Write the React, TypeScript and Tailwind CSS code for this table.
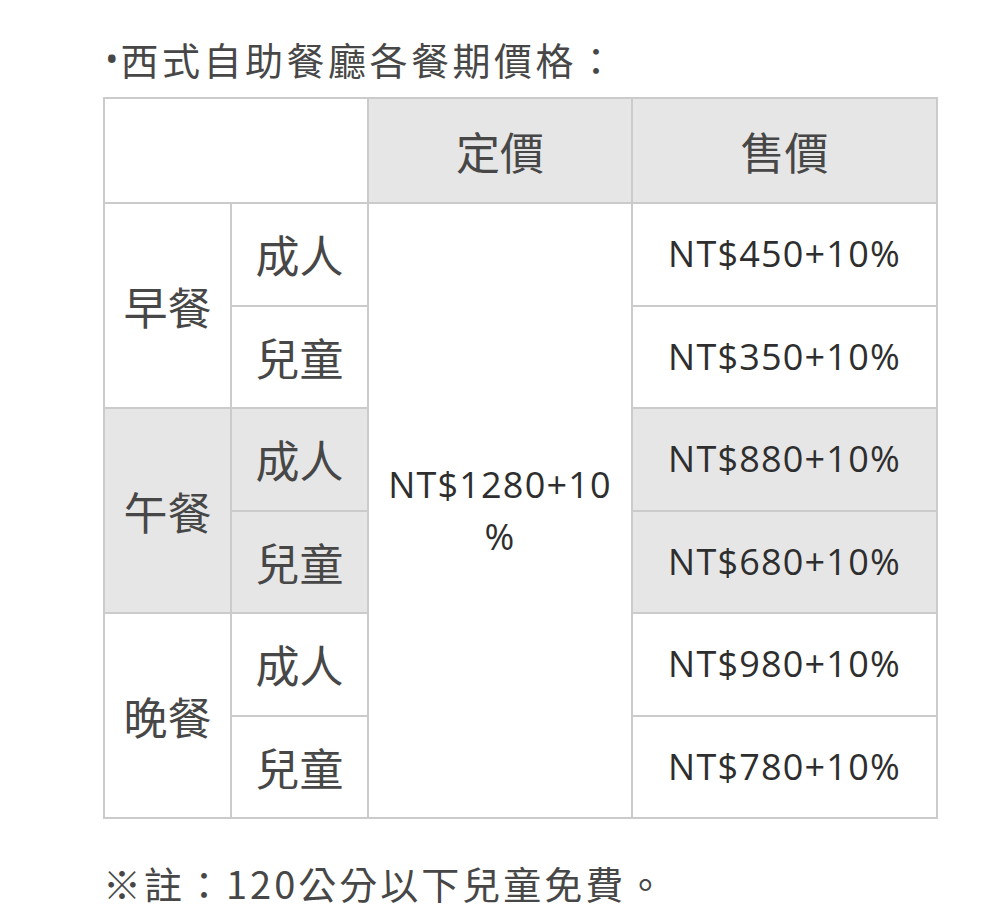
import React from "react";

const cjk = "font-['Noto_Sans_CJK_TC','Noto_Sans',sans-serif]";
const num = "font-['Open_Sans','Noto_Sans_CJK_TC',sans-serif]";

const cell = "border-2 border-[#cbcbcb] text-center align-middle p-0";

type Row = { meal: string; who: string; price: string; gray: boolean };

const rows: Row[] = [
  { meal: "早餐", who: "成人", price: "NT$450+10%", gray: false },
  { meal: "早餐", who: "兒童", price: "NT$350+10%", gray: false },
  { meal: "午餐", who: "成人", price: "NT$880+10%", gray: true },
  { meal: "午餐", who: "兒童", price: "NT$680+10%", gray: true },
  { meal: "晚餐", who: "成人", price: "NT$980+10%", gray: false },
  { meal: "晚餐", who: "兒童", price: "NT$780+10%", gray: false },
];

export default function App() {
  return (
    <div className={`w-[1000px] h-[917px] bg-white pl-[103px] pt-[37px] text-[#474747] ${cjk}`}>
      {/* Title */}
      <div className="flex h-[44px] items-center text-[38px] leading-[44px] tracking-[3.5px]">
        <span className={`ml-[2px] mr-[2px] text-[36px] leading-none tracking-normal ${num}`}>•</span>
        <span>西式自助餐廳各餐期價格：</span>
      </div>

      {/* Price table */}
      <table className="mt-[16px] border-collapse border-2 border-[#cbcbcb]">
        <colgroup>
          <col className="w-[127px]" />
          <col className="w-[137px]" />
          <col className="w-[264px]" />
          <col className="w-[305px]" />
        </colgroup>
        <thead>
          <tr className="h-[105px]">
            <th colSpan={2} className={`${cell} bg-white`}></th>
            <th className={`${cell} bg-[#e6e6e6] text-[44px] font-normal`}>定價</th>
            <th className={`${cell} bg-[#e6e6e6] text-[44px] font-normal`}>售價</th>
          </tr>
        </thead>
        <tbody>
          {rows.map((r, i) => (
            <tr key={i} className="h-[102.5px]">
              {i % 2 === 0 && (
                <td
                  rowSpan={2}
                  className={`${cell} text-[44px] ${r.gray ? "bg-[#e6e6e6]" : "bg-white"}`}
                >
                  {r.meal}
                </td>
              )}
              <td className={`${cell} text-[44px] ${r.gray ? "bg-[#e6e6e6]" : "bg-white"}`}>
                {r.who}
              </td>
              {i === 0 && (
                <td
                  rowSpan={6}
                  className={`${cell} bg-white text-[36px] leading-[52px] tracking-[1.2px] text-[#2e2e2e] ${num}`}
                >
                  NT$1280+10
                  <br />%
                </td>
              )}
              <td
                className={`${cell} text-[36px] tracking-[1.2px] text-[#2e2e2e] ${num} ${
                  r.gray ? "bg-[#e6e6e6]" : "bg-white"
                }`}
              >
                {r.price}
              </td>
            </tr>
          ))}
        </tbody>
      </table>

      {/* Note */}
      <p className="mt-[42px] text-[38px] leading-[44px] tracking-[3px]">
        ※註：120公分以下兒童免費。
      </p>
    </div>
  );
}
